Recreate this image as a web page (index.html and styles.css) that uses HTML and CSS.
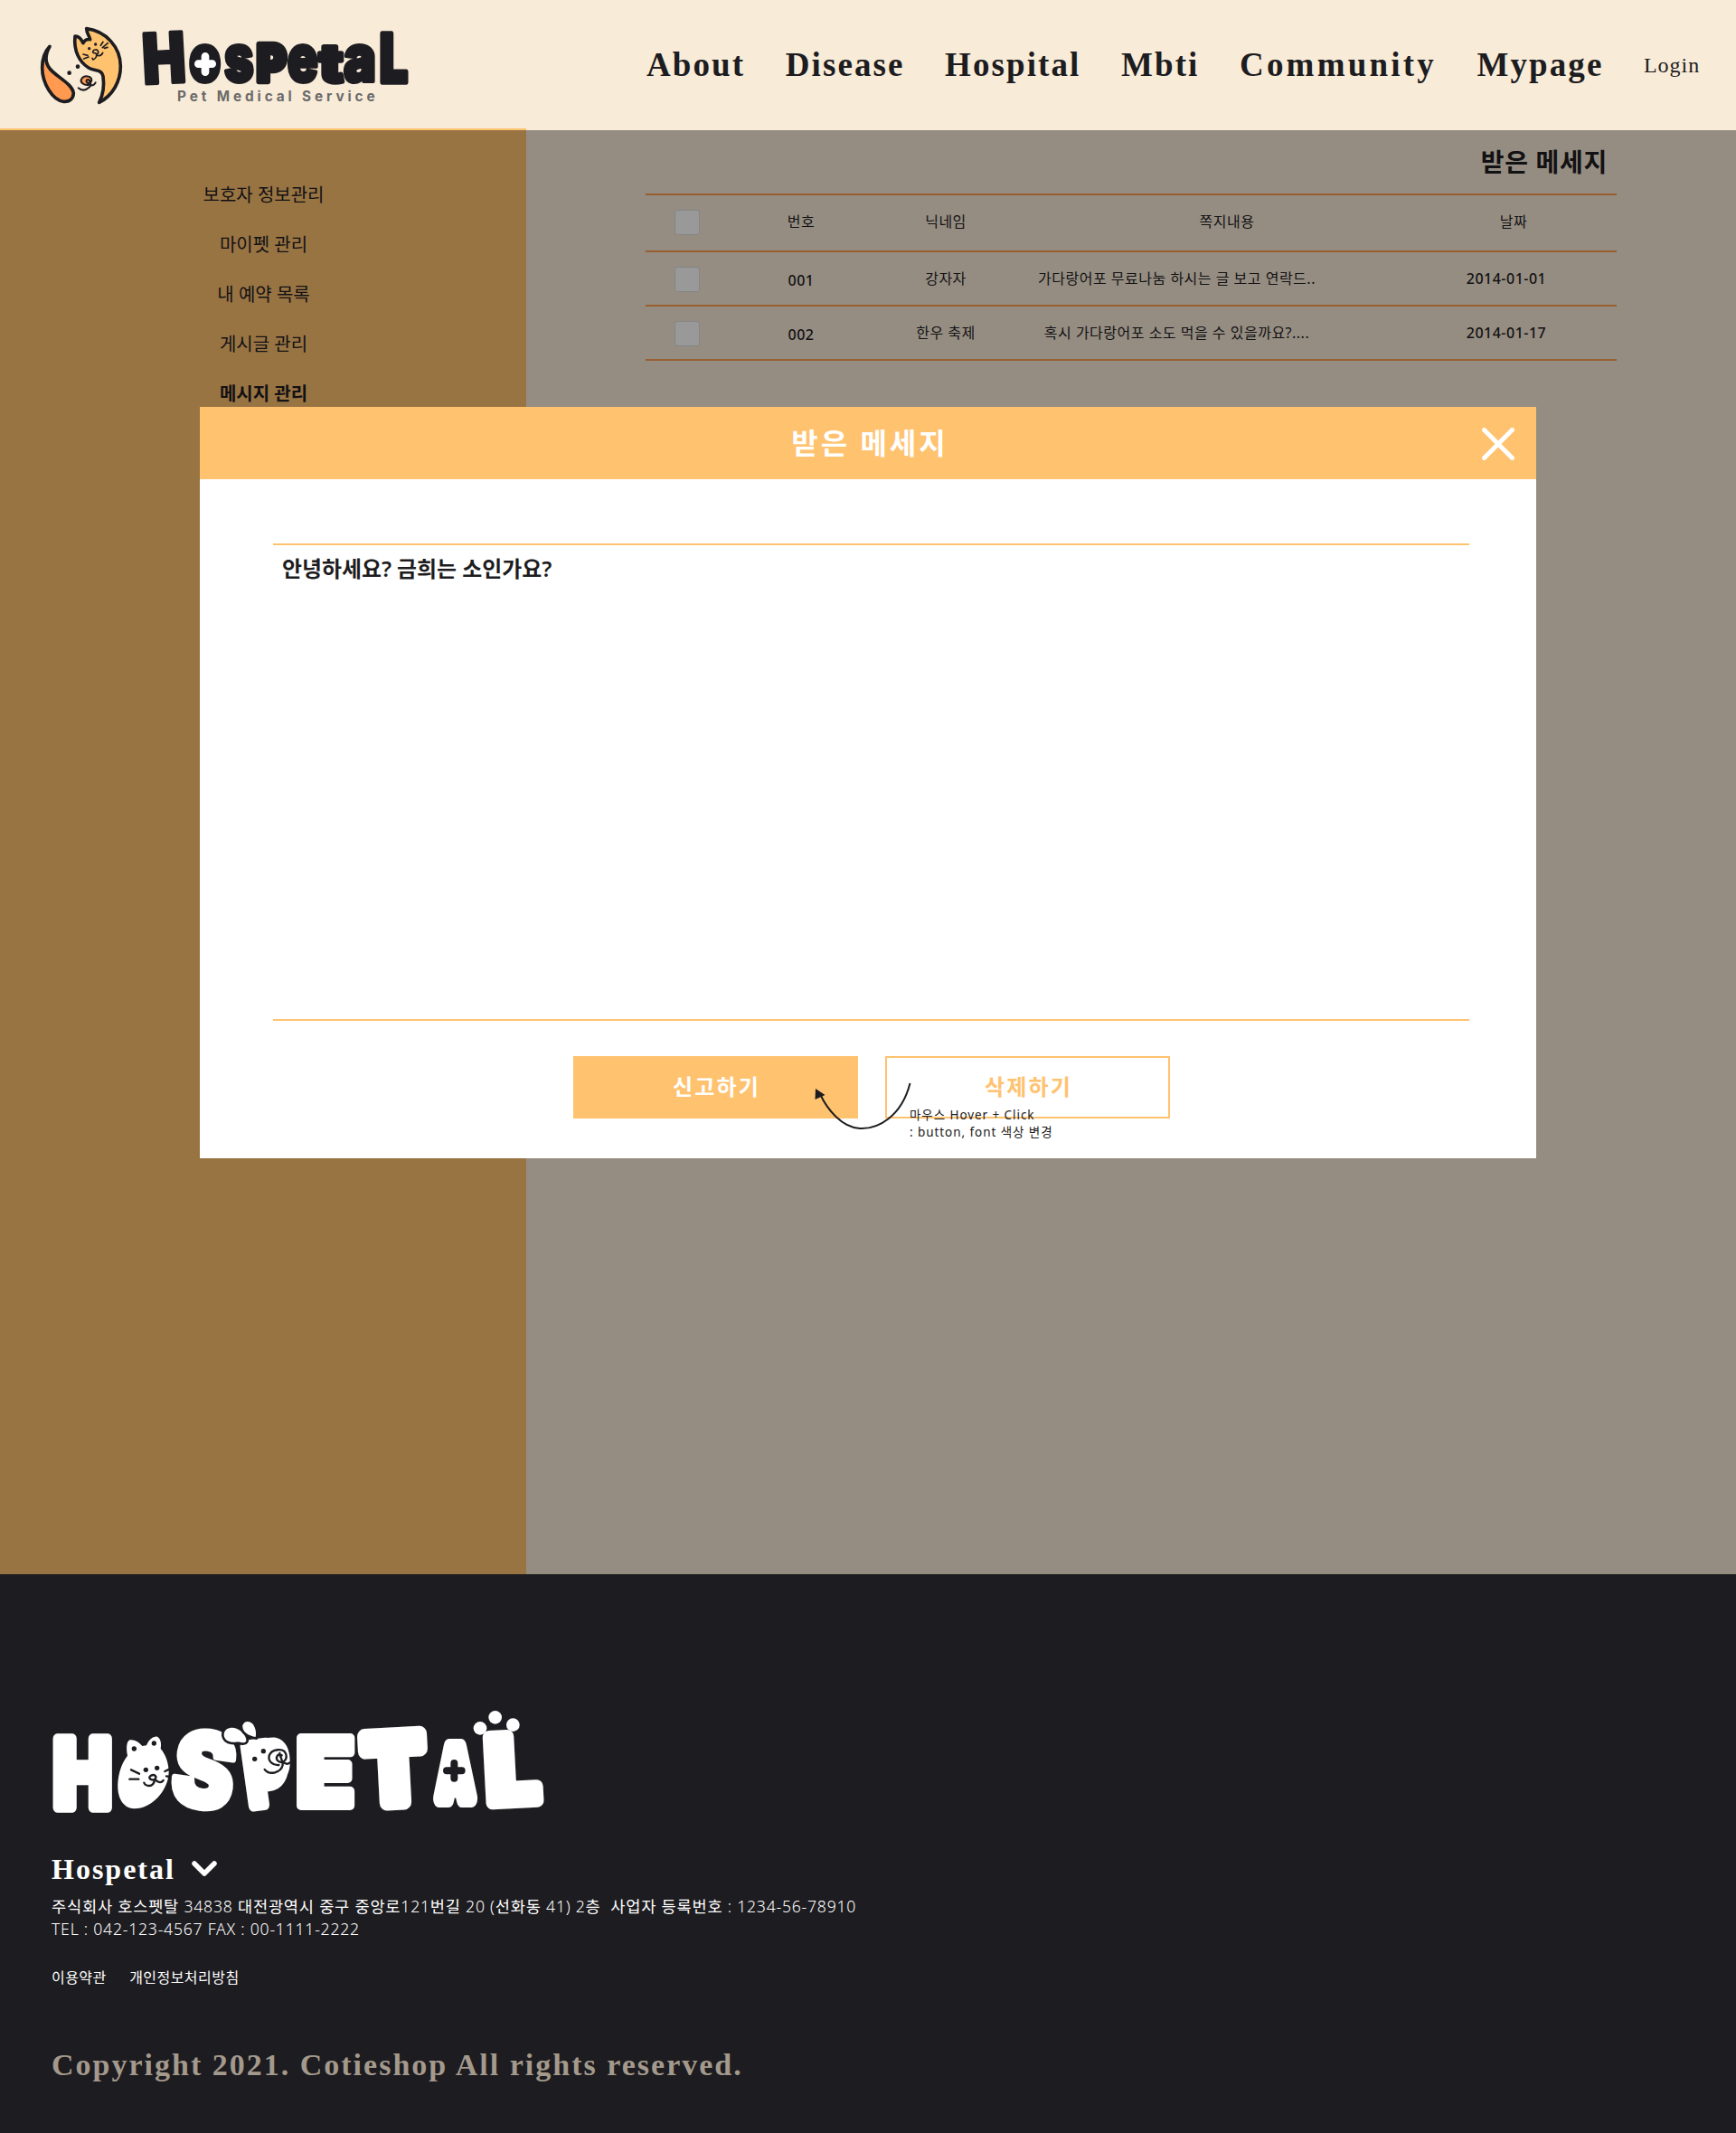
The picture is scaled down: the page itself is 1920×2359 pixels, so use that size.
FILE: index.html
```html
<!DOCTYPE html>
<html lang="ko">
<head>
<meta charset="utf-8">
<title>Hospetal</title>
<link rel="stylesheet" href="styles.css">
</head>
<body>
<header class="header">
  <svg class="brand" viewBox="0 0 1320 384" role="img" aria-label="Hospetal">
    <g stroke="#1d1c20" stroke-width="11" stroke-linejoin="round" stroke-linecap="round">
      <path fill="#ffc26f" d="M197 50C262 58 310 112 310 175C310 225 284 272 239 295C254 266 256 236 252 208C248 184 224 192 204 180C172 160 154 122 159 75C171 74 180 85 186 98C191 88 199 84 209 86C206 73 198 66 197 50Z"/>
      <path fill="#ff9a50" d="M75 109C60 135 57 158 74 181C92 207 150 232 154 264C153 286 138 293 122 292C85 288 50 232 50 180C50 150 60 125 75 109Z"/>
    </g>
    <g fill="none" stroke="#1d1c20" stroke-width="5" stroke-linecap="round">
      <path d="M244 106L252 94M250 113L268 98M256 115L267 112M186 135L201 139M188 150L204 144"/>
      <path d="M218 128A9 8 0 1 1 231 135Q227 130 219 130M230 135Q232 147 219 153L216 148M231 138Q245 144 251 130"/>
    </g>
    <g fill="#1d1c20"><circle cx="227" cy="102" r="5"/><circle cx="206" cy="116" r="5"/><circle cx="168" cy="176" r="7"/><circle cx="140" cy="197" r="7"/></g>
    <g fill="none" stroke="#1d1c20" stroke-width="6" stroke-linecap="round">
      <path fill="#ff9a50" d="M205 236C185 240 174 226 181 216C190 204 213 206 214 220C214 230 200 236 197 226C195 219 203 217 207 222"/>
      <path d="M206 222Q215 233 207 244Q188 262 170 247M209 238Q222 240 227 229"/>
    </g>
    <ellipse cx="590" cy="165" rx="42" ry="56" fill="#1d1c20"/>
    <g class="brand-letters" text-anchor="middle">
      <text x="454" y="230" font-size="228" textLength="143" lengthAdjust="spacingAndGlyphs" transform="rotate(-3 454 150)">H</text>
      <text x="590" y="226" font-size="218" textLength="106" lengthAdjust="spacingAndGlyphs">o</text>
      <text x="703" y="226" font-size="216" textLength="98" lengthAdjust="spacingAndGlyphs">s</text>
      <text x="811" y="225" font-size="169" textLength="98" lengthAdjust="spacingAndGlyphs" stroke-width="20">P</text>
      <text x="914" y="226" font-size="216" textLength="102" lengthAdjust="spacingAndGlyphs">e</text>
      <text x="1009" y="225" font-size="170" textLength="78" lengthAdjust="spacingAndGlyphs" stroke-width="16">t</text>
      <text x="1104" y="226" font-size="216" textLength="108" lengthAdjust="spacingAndGlyphs">a</text>
      <text x="1216" y="227" font-size="224" textLength="94" lengthAdjust="spacingAndGlyphs" stroke-width="16">L</text>
    </g>
    <path d="M591 142V194M568 167H614" stroke="#fff" stroke-width="26" stroke-linecap="round"/>
    <text class="brand-tag" x="498" y="291" textLength="656">Pet Medical Service</text>
  </svg>
  <nav class="nav">
    <a>About</a><a>Disease</a><a>Hospital</a><a>Mbti</a><a class="nav-wide">Community</a><a>Mypage</a>
    <a class="login">Login</a>
  </nav>
</header>

<main class="page">
  <aside class="sidebar">
    <a>보호자 정보관리</a><a>마이펫 관리</a><a>내 예약 목록</a><a>게시글 관리</a><a class="current">메시지 관리</a>
  </aside>
  <section class="inbox">
    <h1 class="inbox-title">받은 메세지</h1>
    <div class="table">
      <div class="row row-head"><i class="check"></i><span>번호</span><span>닉네임</span><span>쪽지내용</span><span>날짜</span></div>
      <div class="row"><i class="check"></i><span class="num">001</span><span>강자자</span><span>가다랑어포 무료나눔 하시는 글 보고 연락드..</span><span class="date">2014-01-01</span></div>
      <div class="row"><i class="check"></i><span class="num">002</span><span>한우 축제</span><span>혹시 가다랑어포 소도 먹을 수 있을까요?....</span><span class="date">2014-01-17</span></div>
    </div>
  </section>

  <div class="modal">
    <div class="modal-head">
      <h2>받은 메세지</h2>
      <svg class="close" viewBox="0 0 36 36"><path d="M2.5 2.5L33.5 33.5M33.5 2.5L2.5 33.5" stroke="#fff" stroke-width="5" stroke-linecap="round"/></svg>
    </div>
    <div class="message">안녕하세요? 금희는 소인가요?</div>
    <div class="actions">
      <button class="btn btn-fill">신고하기</button>
      <button class="btn">삭제하기</button>
    </div>
    <svg class="arrow" viewBox="0 0 112 60"><path d="M105.500 3C96 40 70 54 50 53C30 52 14 32 6 15" fill="none" stroke="#1d1c20" stroke-width="2"/><path d="M1 9L11.500 16L.5 21Z" fill="#1d1c20"/></svg>
    <p class="note">마우스 Hover + Click<br>: button, font 색상 변경</p>
  </div>
</main>

<footer class="footer">
  <svg class="footer-logo" viewBox="0 0 1740 480" role="img" aria-label="HOSPETAL">
    <g class="footer-letters" text-anchor="middle">
      <text x="154" y="387" font-size="312" textLength="192" lengthAdjust="spacingAndGlyphs" stroke-width="34">H</text>
      <text x="556" y="386" font-size="342" textLength="206" lengthAdjust="spacingAndGlyphs" stroke-width="20" transform="rotate(8 556 270)">S</text>
      <text x="762" y="374" font-size="275" textLength="136" lengthAdjust="spacingAndGlyphs" stroke-width="38" transform="rotate(-8 766 270)">P</text>
      <text x="960" y="382" font-size="308" textLength="190" lengthAdjust="spacingAndGlyphs" stroke-width="30">E</text>
      <text x="1186" y="370" font-size="306" textLength="198" lengthAdjust="spacingAndGlyphs" stroke-width="52" transform="rotate(-3 1186 250)">T</text>
      <text x="1391" y="358" font-size="232" textLength="116" lengthAdjust="spacingAndGlyphs" stroke-width="60">A</text>
      <text x="1580" y="368" font-size="300" textLength="170" lengthAdjust="spacingAndGlyphs" stroke-width="44" transform="rotate(-3 1586 260)">L</text>
    </g>
    <path fill="#fff" d="M303 215C298 190 300 168 310 163C326 160 342 170 352 183L366 181C374 162 388 150 402 152C414 158 416 176 413 192C430 212 440 240 440 270C438 335 380 392 325 391C285 388 268 350 271 305C274 270 284 240 303 215Z"/>
    <g fill="#1d1c20"><circle cx="325" cy="192" r="8"/><circle cx="391" cy="174" r="8"/><circle cx="364" cy="262" r="8"/><circle cx="401" cy="256" r="8"/></g>
    <g fill="none" stroke="#1d1c20" stroke-width="7" stroke-linecap="round">
      <path d="M315 262L342 275M310 293H340M427 267L442 260M432 283L442 285"/>
      <path d="M394 295C378 298 370 287 381 281C393 275 402 285 394 293Q390 315 375 315Q362 315 358 305M396 296Q412 310 422 297"/>
    </g>
    <path fill="#fff" d="M682 192C720 168 760 152 795 155C828 162 842 195 842 232C844 270 830 300 790 299L720 290Z"/>
    <g fill="#fff" stroke="#1d1c20" stroke-width="16" paint-order="stroke"><path d="M623 148C622 125 645 117 665 125C686 134 698 152 697 166C692 178 680 168 662 170C643 171 626 167 623 148Z"/><path d="M685 115C690 99 708 98 720 112C729 126 731 141 728 153C707 150 682 137 685 115Z"/></g>
    <g fill="#1d1c20"><circle cx="754" cy="200" r="8"/><circle cx="725" cy="226" r="8"/></g>
    <g fill="none" stroke="#1d1c20" stroke-width="7" stroke-linecap="round">
      <path d="M805 246C785 248 769 234 773 215C780 193 823 187 829 211C834 230 817 243 803 233C792 224 800 206 815 214M808 207C810 224 820 232 818 247C812 271 775 282 758 261M818 234Q830 248 842 238"/>
    </g>
    <path d="M1387 240V290M1362 265H1412" transform="scale(1)" stroke="#1d1c20" stroke-width="24" stroke-linecap="round"/>
    <g fill="#fff"><circle cx="1473" cy="124" r="22"/><circle cx="1523" cy="88" r="22"/><circle cx="1582" cy="113" r="22"/></g>
  </svg>
  <div class="company">Hospetal
    <svg class="chevron" viewBox="0 0 28 18"><path d="M3 3L14 14L25 3" fill="none" stroke="#fff" stroke-width="5.5" stroke-linecap="round" stroke-linejoin="round"/></svg>
  </div>
  <p class="address">주식회사 호스펫탈 <span>34838</span> 대전광역시 중구 중앙로<span>121</span>번길 <span>20 (</span>선화동 <span>41) 2</span>층&nbsp; 사업자 등록번호 <span>: 1234-56-78910</span><br><span>TEL : 042-123-4567 FAX : 00-1111-2222</span></p>
  <div class="legal"><a>이용약관</a><a>개인정보처리방침</a></div>
  <p class="copyright">Copyright 2021. Cotieshop All rights reserved.</p>
</footer>
</body>
</html>
```
FILE: styles.css
```css
* { box-sizing: border-box; }
body {
  margin: 0;
  width: 1920px;
  background: #1d1c20;
  color: #1d1c20;
  font-family: "Noto Sans", "Noto Sans CJK KR", sans-serif;
}
h1, h2, p { margin: 0; }

.header {
  display: flex;
  justify-content: space-between;
  height: 144px;
  padding-left: 30px;
  background: linear-gradient(#ffc26f, #ffc26f) 0 142px / 582px 2px no-repeat #f8ebd8;
}
.brand { width: 440px; height: 128px; margin-top: 15px; flex: none; overflow: visible; }
.brand-letters {
  font-family: Inter, sans-serif;
  font-weight: 900;
  fill: #1d1c20;
  stroke: #1d1c20;
  stroke-width: 12px;
  stroke-linejoin: round;
}
.brand-tag { font: 700 46px Inter, sans-serif; fill: #6b6a6a; }

.nav {
  display: flex;
  align-items: baseline;
  gap: 44.5px;
  width: 1205px;
  padding-top: 51px;
  font: bold 37px/42px "Liberation Serif", serif;
  letter-spacing: 2.1px;
  white-space: nowrap;
}
.nav .nav-wide { letter-spacing: 3.2px; }
.nav .login { font-size: 24px; font-weight: 400; letter-spacing: 1px; position: relative; top: -4px; }

.page { position: relative; display: flex; height: 1597px; }
.sidebar {
  display: flex;
  flex-direction: column;
  align-items: center;
  width: 582px;
  padding: 44px 0 0 1px;
  background: #997443;
  color: #121114;
  font-size: 20px;
  line-height: 55px;
}
.sidebar .current { font-weight: 700; }
.inbox { flex: 1; padding: 15px 132px 0; background: #958d81; color: #121114; }
.inbox-title {
  padding-right: 10px;
  height: 55px;
  font-size: 28px;
  line-height: 40px;
  letter-spacing: .7px;
  text-align: right;
}
.table { border-top: 2px solid #995e2f; }
.row {
  display: grid;
  grid-template-columns: 120px 104px 216px 295px 94px 245px;
  align-items: center;
  justify-items: center;
  height: 60px;
  border-bottom: 2px solid #995e2f;
  font-size: 16px;
  line-height: 24px;
  letter-spacing: .5px;
  white-space: nowrap;
}
.row-head { grid-template-columns: 120px 104px 216px 406px 228px; height: 63px; padding-bottom: 3px; }
.check {
  justify-self: start;
  width: 28px;
  height: 28px;
  margin: 2px 0 0 32px;
  border: 1px solid #858585;
  border-radius: 3px;
  background: #999;
}
.row-head .check { margin-top: 1px; }
.num { padding-top: 4px; font-weight: 500; }
.date { grid-column: 6; font-weight: 500; padding-left: 1px; }

.modal {
  position: absolute;
  left: 221px;
  top: 306px;
  width: 1478px;
  height: 831px;
  background: #fff;
}
.modal-head {
  display: flex;
  align-items: center;
  justify-content: center;
  height: 80px;
  padding: 0 0 1px 4px;
  background: #ffc26f;
  color: #fff;
}
.modal-head h2 { font-size: 32px; line-height: 48px; letter-spacing: 3px; }
.close { position: absolute; right: 24px; top: 23px; width: 36px; height: 36px; }
.message {
  height: 528px;
  margin: 71px 74px 0 81px;
  padding: 8px 10px;
  border-top: 2px solid #ffc26f;
  border-bottom: 2px solid #ffc26f;
  font-size: 23.9px;
  line-height: 36px;
  font-weight: 600;
}
.actions { display: flex; gap: 30px; margin: 39px 0 0 413px; }
.btn {
  width: 315px;
  height: 69px;
  padding: 0 0 2px 2px;
  border: 2px solid #ffc26f;
  background: #fff;
  color: #ffc26f;
  font: 600 24px/36px "Noto Sans", "Noto Sans CJK KR", sans-serif;
  letter-spacing: 2.2px;
}
.btn-fill { background: #ffc26f; color: #fff; }
.arrow { position: absolute; left: 680px; top: 745px; width: 112px; height: 60px; }
.note {
  position: absolute;
  left: 785px;
  top: 774px;
  font-size: 13.5px;
  line-height: 19px;
  letter-spacing: .93px;
  white-space: nowrap;
}

.footer { height: 618px; padding: 129px 57px 0; color: #fff; }
.footer-logo { display: block; width: 580px; height: 160px; margin-left: -17px; overflow: visible; }
.footer-letters {
  font-family: Inter, sans-serif;
  font-weight: 900;
  fill: #fff;
  stroke: #fff;
  stroke-linejoin: round;
}
.company {
  display: flex;
  align-items: center;
  gap: 18px;
  height: 40px;
  margin-top: 17px;
  font: bold 32px/40px "Liberation Serif", serif;
  letter-spacing: 2px;
}
.chevron { width: 28px; height: 18px; }
.address { margin-top: 9px; font-size: 17.6px; line-height: 25px; letter-spacing: .78px; white-space: nowrap; }
.address span { font-weight: 300; }
.legal { display: flex; gap: 25.5px; margin-top: 29px; font-size: 16px; line-height: 24px; letter-spacing: .45px; }
.copyright {
  margin-top: 64px;
  color: #a3998c;
  font: bold 34px/42px "Liberation Serif", serif;
  letter-spacing: 2px;
  white-space: nowrap;
}
```
